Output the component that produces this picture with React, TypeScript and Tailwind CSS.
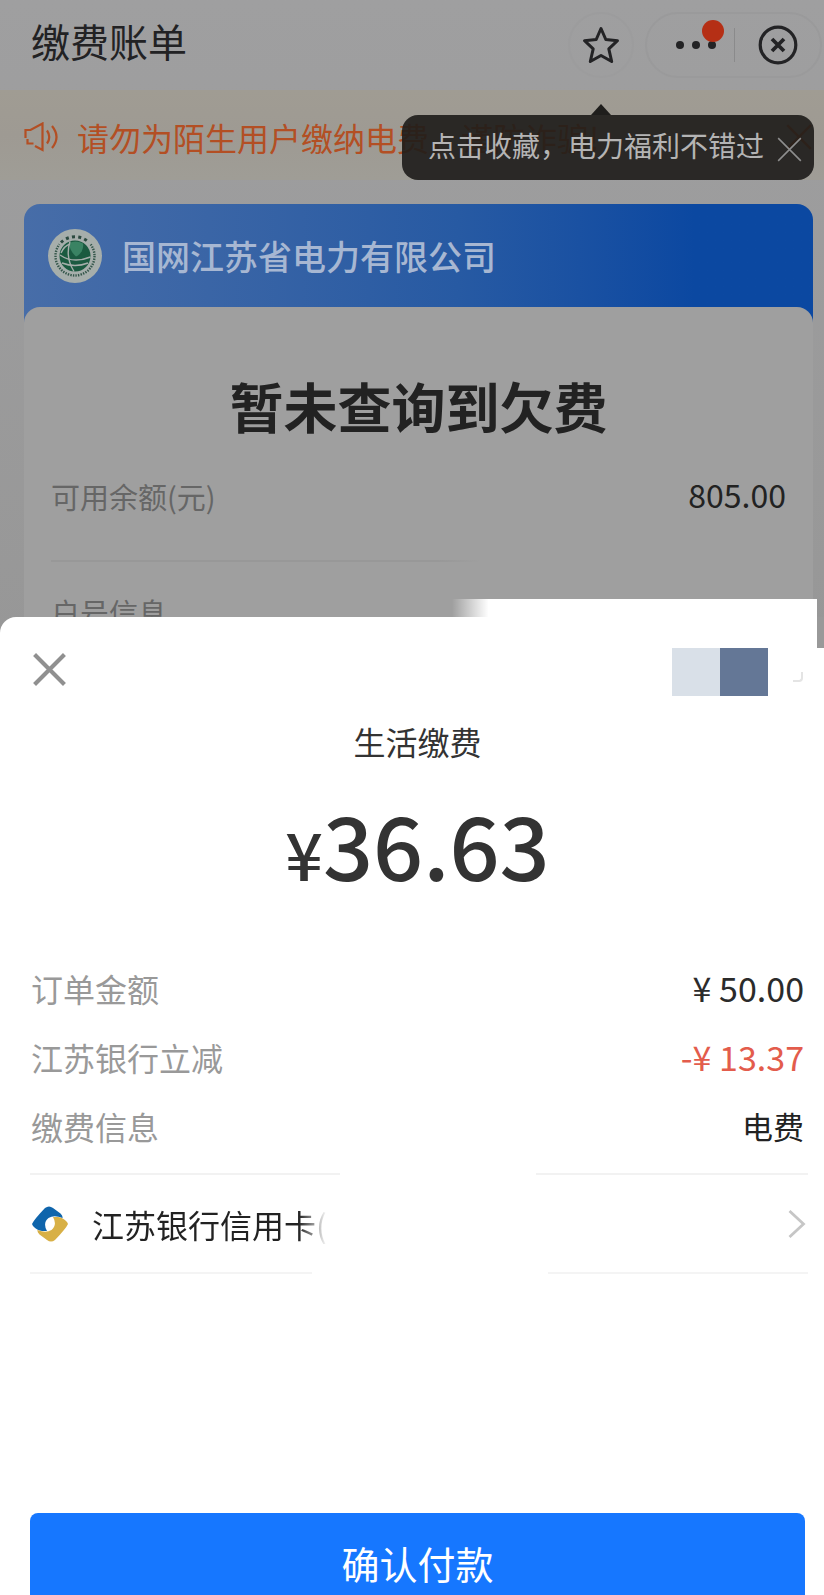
const details = [
  { label: "订单金额", value: "¥ 50.00", style: "text-[34px] text-[#2b2b2b]" },
  { label: "江苏银行立减", value: "-¥ 13.37", style: "text-[34px] text-[#e35c4c]" },
  { label: "缴费信息", value: "电费", style: "text-[31px] text-[#222222]" },
];

function CrossIcon({ className, width }: { className: string; width: number }) {
  return (
    <svg viewBox="0 0 32 32" className={className} fill="none" stroke="currentColor" strokeWidth={width} aria-hidden="true">
      <path d="M1.5 1.5 30.5 30.5M30.5 1.5 1.5 30.5" />
    </svg>
  );
}

function GridLogo() {
  return (
    <svg viewBox="0 0 54 54" className="size-[54px] shrink-0" aria-hidden="true">
      <circle cx="27" cy="27" r="27" fill="#a6aeab" />
      <circle cx="27" cy="27" r="19.5" fill="none" stroke="#34564a" strokeWidth="2.4" strokeDasharray="1.4 1.2" />
      <path d="M11 15A20 20 0 0 1 43 15" fill="none" stroke="#a6aeab" strokeWidth="6" />
      <path d="M13 13.500A20 20 0 0 1 41 13.500" fill="none" stroke="#2c4a40" strokeWidth="3" strokeDasharray="3 3.2" />
      <circle cx="27" cy="27" r="15.500" fill="#1b5a40" />
      <path d="M21 14a15 15 0 0 1 14 0.500a12 12 0 0 1-7 13a20 20 0 0 1-7-13.500z" fill="#3a8363" />
      <g fill="none" stroke="#a6aeab" strokeWidth="1.400">
        <path d="M22 12.500Q17 28 26 42.500" />
        <path d="M12 26Q25 35 42.500 28" />
        <path d="M14 34Q27 39 40 34" />
        <path d="M13 24Q16 17 22 15" />
      </g>
    </svg>
  );
}

function BankLogo() {
  return (
    <svg viewBox="0 0 36 36" className="size-9 shrink-0" aria-hidden="true">
      <path
        d="M0 18Q2 13.500 13 2Q17-1 21 2L28.500 7.500Q31 10 30.500 12Q22 8.500 16.500 12Q10.500 17 15 25L10 25Q5 24.500 1 20Z"
        fill="#0f65ac"
      />
      <path
        d="M0 18Q2 13.500 13 2Q17-1 21 2L28.500 7.500Q31 10 30.500 12Q22 8.500 16.500 12Q10.500 17 15 25L10 25Q5 24.500 1 20Z"
        fill="#d8b046"
        transform="rotate(180 18 18)"
      />
    </svg>
  );
}

export default function App() {
  return (
    <main className="min-h-screen bg-white font-['Noto_Sans_CJK_SC',sans-serif]">

      {/* Bill page */}
      <section className="relative bg-linear-to-b from-[#9f9fa0] to-[#979797]">

        <header className="flex h-[90px] items-start justify-between pt-3 pl-[31px]">
          <h1 className="text-[39px] leading-14 text-[#222224]">缴费账单</h1>

          <div className="flex items-center">
            <button aria-label="收藏" className="mr-[11px] flex size-[66px] items-center justify-center rounded-full border-2 border-[#9c9c9d]">
              <svg viewBox="0 0 38 38" className="size-[38px]" fill="none" stroke="#232325" strokeWidth="3" strokeLinejoin="round" aria-hidden="true">
                <path d="M19 2.500 23.800 13.500 35.500 14.700 26.800 22.800 29.700 35.500 19 29.500 8.300 35.500 11.200 22.800 2.500 14.700 14.200 13.500Z" />
              </svg>
            </button>

            <div className="mr-0.5 flex h-[66px] w-[177px] items-center rounded-full border-2 border-[#9a9a9b]">
              <button aria-label="更多" className="relative flex h-full w-[87px] items-center justify-end gap-2 pr-[18px]">
                <span className="size-2 rounded-full bg-[#232325]" />
                <span className="size-2 rounded-full bg-[#232325]" />
                <span className="size-2 rounded-full bg-[#232325]" />
                <span className="absolute top-1.5 right-[10px] size-[22px] rounded-full bg-[#b52f15]" />
              </button>
              <span className="h-[34px] w-px bg-[#8a8a8b]" />
              <button aria-label="关闭" className="flex h-full flex-1 items-center justify-center">
                <svg viewBox="0 0 40 40" className="size-10" fill="none" stroke="#232325" strokeWidth="3.200" aria-hidden="true">
                  <circle cx="20" cy="20" r="17.800" />
                  <path d="M14 14 26 26M26 14 14 26" strokeWidth="3.800" />
                </svg>
              </button>
            </div>
          </div>
        </header>

        {/* Notice */}
        <div className="flex h-[90px] items-center bg-linear-to-b from-[#a09c93] via-[#9e9a93] to-[#9f9d96] pt-1 pr-3 pl-6 text-[#b34f24]">
          <svg viewBox="0 0 36 30" className="mr-[17px] h-[30px] w-9 shrink-0" fill="none" stroke="currentColor" strokeWidth="2.200" aria-hidden="true">
            <path d="M1.500 16V8H6.500L18.500 1.500V28L11 24M3.500 17V21.500H9.500" />
            <path d="M23 8.500Q27.500 15 23 21.500M28 4Q37 15 28 26" />
          </svg>
          <p className="flex-1 text-[32px] leading-10 whitespace-nowrap">请勿为陌生用户缴纳电费，谨防诈骗!</p>
          <CrossIcon className="size-[26px]" width={3} />
        </div>

        {/* Favourite tip */}
        <div className="absolute top-[104px] right-[10px] flex w-[412px] flex-col">
          <svg viewBox="0 0 20 11" className="ml-[189px] h-[11px] w-5" aria-hidden="true">
            <path d="M10 0 20 11H0Z" fill="#1f1e1c" />
          </svg>
          <div className="flex h-[65px] items-center rounded-2xl bg-[#1d1c1a]/90 pr-3 pb-1.5 pl-[26px] text-[#b4b4b4]">
            <span className="flex-1 text-[28px] leading-10 whitespace-nowrap">点击收藏，电力福利不错过</span>
            <button aria-label="关闭提示" className="mt-2.5">
              <CrossIcon className="size-[25px] text-[#8e8e8e]" width={2} />
            </button>
          </div>
        </div>

        {/* Account card */}
        <div className="mt-6 mr-[11px] ml-6 rounded-t-2xl bg-linear-to-r from-[#476da8] via-[#275aa3] via-55% to-[#0b48a1] to-85%">
          <div className="flex h-[103px] items-center gap-5 pl-6">
            <GridLogo />
            <h2 className="text-[34px] leading-10 font-medium text-[#a7b7d2]">国网江苏省电力有限公司</h2>
          </div>

          <div className="h-[336px] rounded-t-2xl bg-[#9f9f9f] px-[27px] pt-[67px]">
            <p className="text-center text-[54px] leading-[64px] font-bold text-[#222222]">暂未查询到欠费</p>
            <div className="mt-9 flex items-center justify-between leading-10">
              <span className="text-[29px] text-[#666666]">可用余额(元)</span>
              <span className="pb-1 text-[32px] text-[#222222]">805.00</span>
            </div>
            <div className="mt-[42px] h-0.5 w-[430px] bg-linear-to-r from-[#989898] from-90% to-[#9f9f9f]" />
            <p className="mt-[30px] text-[29px] leading-10 text-[#666666]">户号信息</p>
          </div>
        </div>
      </section>

      {/* Payment sheet */}
      <section className="relative -mt-[26px] rounded-tl-2xl bg-white pt-[31px]">
        <div className="absolute -top-[18px] right-[7px] h-[18px] w-[365px] bg-linear-to-r from-transparent to-white to-10%" />
        <div className="absolute top-0 right-0 h-[31px] w-[7px] bg-[#999999]" />

        <div className="flex h-12 items-center justify-between pr-[21px] pl-[33px]">
          <button aria-label="关闭" className="flex h-[42px] items-center self-start">
            <CrossIcon className="size-[33px] text-[#909090]" width={4} />
          </button>
          <div className="flex items-center">
            <span className="size-12 bg-[#d9e0e8]" />
            <span className="size-12 bg-[#647796]" />
            <span className="mt-2.5 ml-[25px] size-2.5 rounded-br-sm border-r-2 border-b-2 border-[#e4e4e4]" />
          </div>
        </div>

        <div className="pr-[19px] pl-[30px] text-center text-[#333333]">
          <h2 className="mt-[25px] text-[32px] leading-10">生活缴费</h2>
          <p className="mt-[34px] text-[88px] leading-24 font-medium">
            <span className="text-[66px] leading-none">¥</span>36.63
          </p>
        </div>

        <dl className="mt-[62px] pr-5 pl-[31px]">
          {details.map((item) => (
            <div key={item.label} className="flex h-[69px] items-center justify-between">
              <dt className="text-[32px] leading-10 text-[#999999]">{item.label}</dt>
              <dd className={`leading-10 ${item.style}`}>{item.value}</dd>
            </div>
          ))}
        </dl>

        <div className="mt-[13px] flex justify-between pr-4 pl-[30px]">
          <span className="h-0.5 w-[310px] bg-[#f2f2f2]" />
          <span className="h-0.5 w-[272px] bg-[#f2f2f2]" />
        </div>
        <button className="flex h-[97px] w-full items-center pr-[18px] pl-8 text-left">
          <BankLogo />
          <span className="ml-6 bg-linear-to-r from-[#222222] from-88% to-transparent bg-clip-text text-[32px] leading-10 text-transparent">
            江苏银行信用卡(
          </span>
          <svg viewBox="0 0 18 28" className="ml-auto h-7 w-[18px]" fill="none" stroke="#c6c6c6" strokeWidth="2.800" aria-hidden="true">
            <path d="M1.500 1 15.500 14 1.500 27" />
          </svg>
        </button>
        <div className="flex justify-between pr-4 pl-[30px]">
          <span className="h-0.5 w-[282px] bg-[#f4f4f4]" />
          <span className="h-0.5 w-[260px] bg-[#f4f4f4]" />
        </div>

        <div className="mt-[239px] pr-[19px] pl-[30px]">
          <button className="w-full rounded-t-lg bg-[#1677ff] pt-[26px] pb-2 text-[38px] leading-12 text-white">
            确认付款
          </button>
        </div>
      </section>

    </main>
  );
}
